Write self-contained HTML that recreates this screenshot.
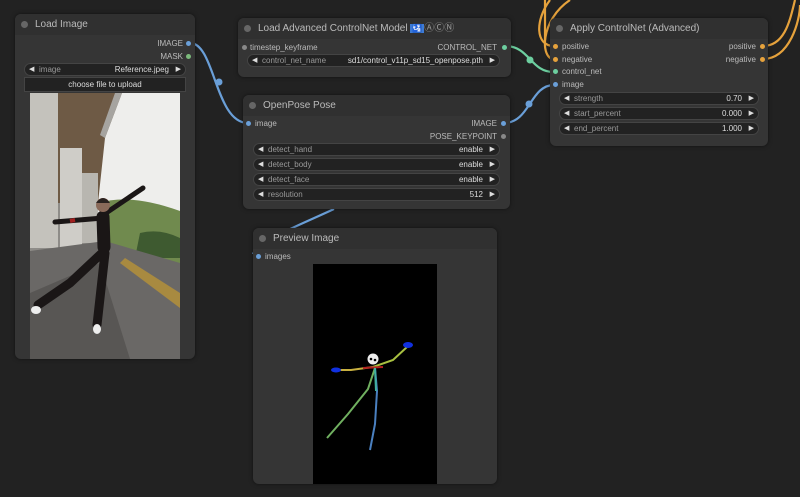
<!DOCTYPE html>
<html><head><meta charset="utf-8"><style>
*{margin:0;padding:0;box-sizing:border-box}
body{width:800px;height:497px;background:#222;position:relative;overflow:hidden;font-family:"Liberation Sans",sans-serif;font-size:8.5px;color:#ccc}
.node{position:absolute;background:#353535;border-radius:6px;box-shadow:0 0 4px rgba(0,0,0,.5)}
.title{height:21px;background:#303030;border-radius:6px 6px 0 0;color:#bbb;font-size:10px;line-height:21px;padding-left:20px;position:relative}
.title:before{content:"";position:absolute;left:6px;top:7px;width:7px;height:7px;border-radius:50%;background:#666}
.w{position:absolute;height:13px;background:#222;border:1px solid #444;border-radius:7px;font-size:8px;line-height:11px;color:#999;padding:0 16px 0 14px}
.w:before{content:"◀";position:absolute;left:4px;color:#ddd;font-size:7px}
.w:after{content:"▶";position:absolute;right:4px;color:#ddd;font-size:7px}
.w b{position:absolute;right:16px;color:#ddd;font-weight:normal}
.t{position:absolute;font-size:8px;color:#bbb}
.d{position:absolute;width:5px;height:5px;border-radius:50%}
</style></head><body>
<svg width="800" height="497" style="position:absolute;left:0;top:0">
<g fill="none" stroke-width="2.2">
<path d="M190 43 C215 43 215 123 248 123" stroke="#6a9fd8"/>
<path d="M505 46 C530 46 530 72 554 72" stroke="#6dcfa0"/>
<path d="M504 123 C530 123 530 85 554 85" stroke="#6a9fd8"/>
<path d="M334 209 C300 225 260 240 253 254" stroke="#6a9fd8"/>
<path d="M554 46 C535 46 535 20 550 0" stroke="#e6a23c"/>
<path d="M554 59 C540 59 540 20 570 0" stroke="#e6a23c"/>
<path d="M545 40 C545 20 545 10 545 0" stroke="#e6a23c"/>
<path d="M763 46 C785 46 790 20 795 0" stroke="#e6a23c"/>
<path d="M763 59 C790 59 800 20 800 5" stroke="#e6a23c"/>
</g>
<circle cx="219" cy="82" r="3.5" fill="#6a9fd8"/>
<circle cx="530" cy="60" r="3.5" fill="#6dcfa0"/>
<circle cx="529" cy="104" r="3.5" fill="#6a9fd8"/>
</svg>

<div class="node" style="left:15px;top:14px;width:180px;height:345px">
<div class="title">Load Image</div>
<span class="t" style="right:12px;top:25px">IMAGE</span><span class="d" style="right:4px;top:27px;background:#6a9fd8"></span>
<span class="t" style="right:12px;top:38px">MASK</span><span class="d" style="right:4px;top:40px;background:#7cba7c"></span>
<div class="w" style="left:9px;top:49px;width:162px">image<b>Reference.jpeg</b></div>
<div style="position:absolute;left:9px;top:63px;width:162px;height:15px;background:#222;border:1px solid #444;color:#ddd;font-size:8px;text-align:center;line-height:13px">choose file to upload</div>
<svg style="position:absolute;left:15px;top:79px" width="150" height="266">
<rect width="150" height="266" fill="#8e8c88"/>
<rect x="60" y="0" width="90" height="160" fill="#eeeeec"/>
<path d="M25 0 H92 L75 45 L68 110 H25Z" fill="#6e5a45"/>
<path d="M85 0 H92 L75 45 L70 42Z" fill="#a6a4a0"/>
<rect x="0" y="0" width="28" height="155" fill="#c4c2bc"/>
<rect x="30" y="55" width="22" height="100" fill="#cfcdc8"/>
<rect x="52" y="80" width="16" height="70" fill="#b8b6b0"/>
<path d="M70 110 Q100 100 150 118 V170 H70Z" fill="#708a4e"/>
<path d="M110 140 Q130 135 150 145 V165 H105Z" fill="#3e5a30"/>
<path d="M0 158 L75 148 L150 170 V266 H0Z" fill="#6a6866"/>
<path d="M0 200 L70 170 L100 266 H0Z" fill="#585654"/>
<path d="M95 165 L150 200 V215 L90 170Z" fill="#a88a40"/>
<g stroke="#1a1616" fill="none" stroke-linecap="round">
<path d="M73 122 L113 95 M73 125 L25 129" stroke-width="5"/>
<path d="M73 124 L74 154" stroke-width="13"/>
<path d="M72 160 L40 190 L8 212 M75 160 L70 205 L67 232" stroke-width="9"/>
</g>
<path d="M40 128 L45 127" stroke="#a02020" stroke-width="4"/>
<circle cx="73" cy="112" r="7" fill="#8a6a5a"/>
<path d="M66 110 Q73 100 80 110" fill="#2a2220"/>
<ellipse cx="6" cy="217" rx="5" ry="4" fill="#eee"/>
<ellipse cx="67" cy="236" rx="4" ry="5" fill="#eee"/>
</svg>
</div>

<div class="node" style="left:238px;top:18px;width:273px;height:59px">
<div class="title">Load Advanced ControlNet Model <span style="background:#3d7bd6;color:#fff;font-size:8px;padding:0 2px">🛂</span><span style="color:#999">ⒶⒸⓃ</span></div>
<span class="d" style="left:4px;top:27px;background:#888"></span><span class="t" style="left:12px;top:25px">timestep_keyframe</span>
<span class="t" style="right:14px;top:25px">CONTROL_NET</span><span class="d" style="right:4px;top:27px;background:#6dcfa0"></span>
<div class="w" style="left:9px;top:36px;width:253px">control_net_name<b>sd1/control_v11p_sd15_openpose.pth</b></div>
</div>

<div class="node" style="left:243px;top:95px;width:267px;height:114px">
<div class="title">OpenPose Pose</div>
<span class="d" style="left:3px;top:26px;background:#6a9fd8"></span><span class="t" style="left:12px;top:24px">image</span>
<span class="t" style="right:13px;top:24px">IMAGE</span><span class="d" style="right:4px;top:26px;background:#6a9fd8"></span>
<span class="t" style="right:13px;top:37px">POSE_KEYPOINT</span><span class="d" style="right:4px;top:39px;background:#888"></span>
<div class="w" style="left:10px;top:48px;width:247px">detect_hand<b>enable</b></div>
<div class="w" style="left:10px;top:63px;width:247px">detect_body<b>enable</b></div>
<div class="w" style="left:10px;top:78px;width:247px">detect_face<b>enable</b></div>
<div class="w" style="left:10px;top:93px;width:247px">resolution<b>512</b></div>
</div>

<div class="node" style="left:253px;top:228px;width:244px;height:256px">
<div class="title">Preview Image</div>
<span class="d" style="left:3px;top:26px;background:#6a9fd8"></span><span class="t" style="left:12px;top:24px">images</span>
<svg style="position:absolute;left:60px;top:36px" width="124" height="220">
<rect width="124" height="220" fill="#000"/>
<g stroke-width="2" fill="none">
<path d="M24 106 L38 106 L60 103" stroke="#c8b040"/>
<path d="M60 103 L80 96 L94 83" stroke="#a8c040"/>
<path d="M50 104 L70 103" stroke="#b02020"/>
<path d="M62 104 L55 125 L35 150 L14 174" stroke="#70b060"/>
<path d="M62 104 L64 127 L62 160 L57 186" stroke="#4a80c0"/>
<path d="M62 104 L63 127" stroke="#40b0a0"/>
</g>
<ellipse cx="23" cy="106" rx="5" ry="2.5" fill="#1030e0"/>
<ellipse cx="95" cy="81" rx="5" ry="3" fill="#1030e0"/>
<circle cx="60" cy="95" r="5.5" fill="#eee"/>
<circle cx="58" cy="95" r="1.3" fill="#000"/><circle cx="62" cy="96" r="1.3" fill="#000"/>
</svg>
</div>

<div class="node" style="left:550px;top:18px;width:218px;height:128px">
<div class="title">Apply ControlNet (Advanced)</div>
<span class="d" style="left:3px;top:26px;background:#e6a23c"></span><span class="t" style="left:12px;top:24px">positive</span>
<span class="d" style="left:3px;top:39px;background:#e6a23c"></span><span class="t" style="left:12px;top:37px">negative</span>
<span class="d" style="left:3px;top:51px;background:#6dcfa0"></span><span class="t" style="left:12px;top:49px">control_net</span>
<span class="d" style="left:3px;top:64px;background:#6a9fd8"></span><span class="t" style="left:12px;top:62px">image</span>
<span class="t" style="right:12px;top:24px">positive</span><span class="d" style="right:3px;top:26px;background:#e6a23c"></span>
<span class="t" style="right:12px;top:37px">negative</span><span class="d" style="right:3px;top:39px;background:#e6a23c"></span>
<div class="w" style="left:9px;top:74px;width:200px">strength<b>0.70</b></div>
<div class="w" style="left:9px;top:89px;width:200px">start_percent<b>0.000</b></div>
<div class="w" style="left:9px;top:104px;width:200px">end_percent<b>1.000</b></div>
</div>
</body></html>
